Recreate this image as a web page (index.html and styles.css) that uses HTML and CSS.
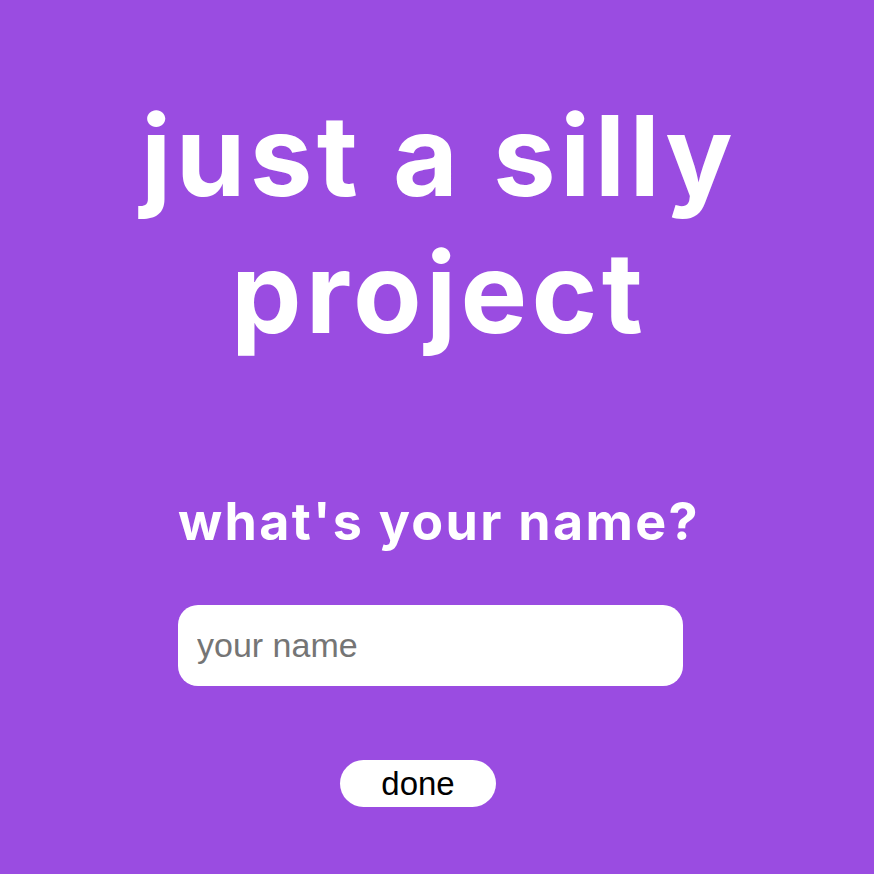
FILE: index.html
```html
<!DOCTYPE html>
<html lang="en">
<head>
<meta charset="utf-8">
<title>just a silly project</title>
<link rel="stylesheet" href="styles.css">
</head>
<body>
<main class="page">
  <h1 class="title">just a silly project</h1>
  <h2 class="question">what's your name?</h2>
  <input class="name-input" type="text" placeholder="your name">
  <button class="done-btn" type="button">done</button>
</main>
</body>
</html>
```
FILE: styles.css
```css
html, body {
  margin: 0;
  padding: 0;
  background: #9a4ce1;
  height: 100%;
}
.page {
  padding-top: 87px;
  font-family: "Inter", "Liberation Sans", sans-serif;
  color: #fff;
}
.title {
  margin: 0 auto;
  width: 700px;
  text-align: center;
  font-size: 112px;
  font-weight: 700;
  line-height: 137px;
  letter-spacing: 4.3px;
  padding-left: 4px;
}
.question {
  margin: 129px 0 0;
  text-align: center;
  font-size: 52px;
  font-weight: 700;
  line-height: 63px;
  letter-spacing: 2.3px;
  padding-left: 4px;
}
.name-input {
  display: block;
  box-sizing: border-box;
  margin: 52px 0 0 178px;
  width: 505px;
  height: 81px;
  border: none;
  border-radius: 20px;
  padding: 0 19px;
  background: #fff;
  font-family: "Liberation Sans", Arial, sans-serif;
  font-size: 34px;
  color: #000;
  outline: none;
}
.name-input::placeholder {
  color: #757575;
}
.done-btn {
  display: block;
  box-sizing: border-box;
  margin: 74px 0 0 340px;
  width: 156px;
  height: 47px;
  border: none;
  border-radius: 24px;
  background: #fff;
  color: #000;
  font-family: "Liberation Sans", Arial, sans-serif;
  font-size: 33px;
  padding: 0;
  line-height: 47px;
}
```
